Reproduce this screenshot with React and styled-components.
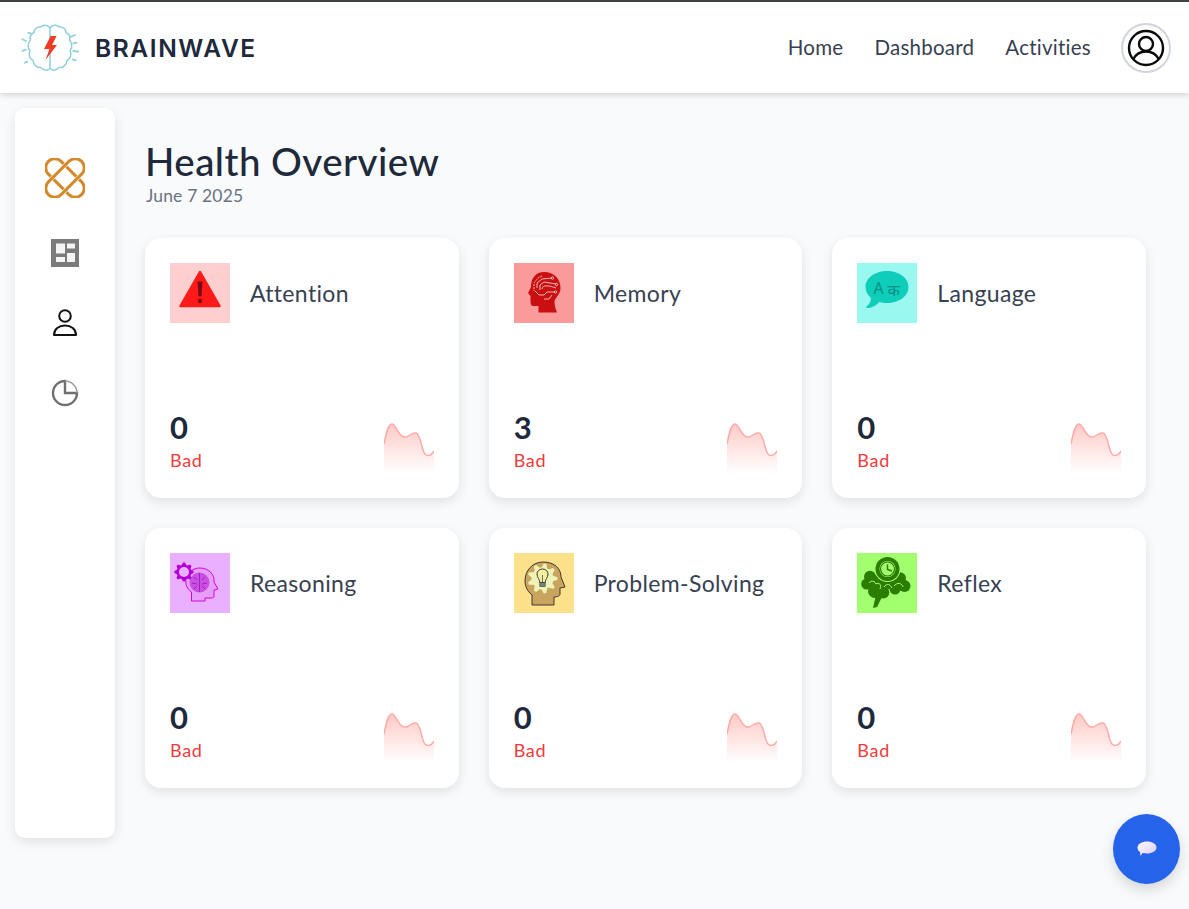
import React from "react";
import styled, { createGlobalStyle } from "styled-components";

const Global = createGlobalStyle`
  html, body { margin: 0; padding: 0; background: #f9fafb; }
  body { font-family: "Lato", "Noto Sans", sans-serif; color: #1f2937; }
  * { box-sizing: border-box; }
`;

const Page = styled.div`
  width: 100%;
  height: 909px;
  overflow: hidden;
  background: #f9fafb;
`;

const Header = styled.header`
  height: 93px;
  background: #fff;
  border-top: 2px solid #3f4440;
  box-shadow: 0 2px 6px rgba(0, 0, 0, 0.16);
  display: flex;
  align-items: center;
  justify-content: space-between;
  padding: 0 18px 0 20px;
  position: relative;
`;

const Brand = styled.div`
  display: flex;
  align-items: center;
  gap: 15px;
`;

const BrandName = styled.span`
  font-family: "Inter", sans-serif;
  font-size: 24.5px;
  font-weight: 600;
  letter-spacing: 1.6px;
  color: #1e293b;
`;

const Nav = styled.nav`
  display: flex;
  align-items: center;
  gap: 31px;
`;

const NavLink = styled.a`
  font-size: 20.5px;
  line-height: 24px;
  margin-top: -2px;
  color: #374151;
  letter-spacing: 0.25px;
`;

const Avatar = styled.div`
  width: 50px;
  height: 50px;
  margin-left: -1px;
  border-radius: 50%;
  border: 2px solid #d1d5db;
  display: flex;
  align-items: center;
  justify-content: center;
`;

const Main = styled.main`
  display: flex;
  padding: 15px 0 0 15px;
  gap: 30px;
`;

const Sidebar = styled.aside`
  width: 100px;
  height: 730px;
  flex: none;
  background: #fff;
  border-radius: 10px;
  box-shadow: 0 4px 12px rgba(0, 0, 0, 0.1);
  display: flex;
  flex-direction: column;
  align-items: center;
  padding-top: 50px;
  gap: 40px;
`;

const SideIcon = styled.div`
  width: 40px;
  height: 30px;
  display: flex;
  align-items: center;
  justify-content: center;
`;

const LeadIcon = styled(SideIcon)`
  height: 40px;
`;

const Content = styled.section`
  width: 1001px;
  padding-top: 31px;
`;

const Title = styled.h1`
  margin: 0;
  font-size: 38.5px;
  line-height: 44px;
  font-weight: 500;
  letter-spacing: 0.45px;
  color: #1e293b;
`;

const DateLine = styled.div`
  margin: 1px 0 0 1px;
  font-size: 17.5px;
  line-height: 24px;
  letter-spacing: 0.15px;
  color: #6b7280;
`;

const Grid = styled.div`
  display: grid;
  grid-template-columns: repeat(3, 1fr);
  column-gap: 30px;
  row-gap: 30px;
  margin-top: 30px;
`;

const Card = styled.article`
  height: 260px;
  background: #fff;
  border-radius: 16px;
  box-shadow: 0 4px 12px rgba(0, 0, 0, 0.1);
  padding: 25px;
  display: flex;
  flex-direction: column;
  justify-content: space-between;
`;

const CardHead = styled.div`
  display: flex;
  align-items: center;
  gap: 20px;
`;

const IconBox = styled.div`
  width: 60px;
  height: 60px;
  flex: none;
  background: ${(p) => p.$bg};
  display: flex;
`;

const CardLabel = styled.h2`
  margin: 0;
  font-size: 23px;
  font-weight: 400;
  letter-spacing: 0.35px;
  color: #374151;
`;

const CardFoot = styled.div`
  display: flex;
  justify-content: space-between;
  align-items: flex-end;
`;

const Score = styled.div`
  font-size: 31px;
  line-height: 36px;
  font-weight: 700;
  margin-bottom: 3px;
  color: #1e293b;
`;

const Status = styled.div`
  font-size: 18px;
  line-height: 24px;
  padding-bottom: 1px;
  letter-spacing: 0.7px;
  color: #ef3b3b;
`;

const Fab = styled.button`
  position: fixed;
  left: 1113px;
  top: 814px;
  width: 67px;
  height: 70px;
  border: 0;
  border-radius: 50%;
  background: #2563eb;
  box-shadow: 0 6px 14px rgba(0, 0, 0, 0.14);
  display: flex;
  align-items: center;
  justify-content: center;
  padding: 0;
`;

const Logo = () => (
  <svg width="60" height="50" viewBox="0 0 60 50" fill="none">
    <g stroke="#8fd0dc" strokeWidth="1.500" strokeLinecap="round" strokeLinejoin="round">
      <path d="M30 5 C28 2 23 1 20.500 4 C17 3.500 14 6 14 9.500 C11 11 9.500 14 10.500 17 C7.500 20 7.500 25 10 27.500 C8 31 9.500 36 13 37.500 C13.500 42 17 45 21 44.500 C24 48 28.500 48 30 45 Z" />
      <path d="M30 5 C32 2 37 1 39.500 4 C43 3.500 46 6 46 9.500 C49 11 50.500 14 49.500 17 C52.500 20 52.500 25 50 27.500 C52 31 50.500 36 47 37.500 C46.500 42 43 45 39 44.500 C36 48 31.500 48 30 45" />
      <path d="M8.300 9.700 L11 10.700 M2.300 16.300 L6 18 M2.300 28 L6 26.700 M5 39.700 L7.300 38.700 M51 13.700 L55 12 M53.300 20.300 L56.700 19.700 M53.300 28 L58.300 28.700 M52.700 36.300 L55.700 37.300" strokeWidth="1.800" />
    </g>
    <path d="M30.700 13 L24 26 L29.500 26 L25.500 37 L37 22 L32 22 L36.500 13 Z" fill="#ef3a24" />
  </svg>
);

const AvatarIcon = () => (
  <svg width="38" height="38" viewBox="0 0 38 38" fill="none" stroke="#0a0a0a" strokeWidth="2.400">
    <circle cx="19" cy="19" r="17" />
    <circle cx="19" cy="15" r="7" />
    <path d="M6.500 30 C9 25 14 22.500 19 22.500 C24 22.500 29 25 31.500 30" />
  </svg>
);

const KnotIcon = () => (
  <svg width="40" height="40" viewBox="0 0 40 40" fill="none" strokeWidth="3">
    <rect x="-3.500" y="11" width="47" height="18" rx="9" transform="rotate(45 20 20)" stroke="#d48a2a" />
    <rect x="-3.500" y="11" width="47" height="18" rx="9" transform="rotate(-45 20 20)" stroke="#ffffff" strokeWidth="4" />
    <rect x="-3.500" y="11" width="47" height="18" rx="9" transform="rotate(-45 20 20)" stroke="#d48a2a" />
  </svg>
);

const PanelsIcon = () => (
  <svg width="28" height="28" viewBox="0 0 28 28">
    <rect width="28" height="28" fill="#7b7b7b" />
    <g fill="#f4f4f4">
      <rect x="5" y="4.500" width="9" height="10" />
      <rect x="16" y="4.500" width="8" height="5" />
      <rect x="5" y="18" width="9" height="5" />
      <rect x="16" y="14" width="8" height="9" />
    </g>
  </svg>
);

const PersonIcon = () => (
  <svg width="26" height="28" viewBox="0 0 26 28" fill="none" stroke="#111" strokeWidth="2">
    <circle cx="13" cy="7" r="5.800" />
    <path d="M2 26 C2 20 7 16.500 13 16.500 C19 16.500 24 20 24 26 Z" strokeLinejoin="round" />
  </svg>
);

const PieIcon = () => (
  <svg width="28" height="28" viewBox="0 0 28 28" fill="none">
    <path d="M14 2 A12 12 0 1 0 26 14 L14 14 Z" stroke="#707070" strokeWidth="2.400" />
    <path d="M14 2 A12 12 0 0 1 26 14" stroke="#9a9a9a" strokeWidth="1.400" />
  </svg>
);

const Svg60 = ({ children }) => (
  <svg width="60" height="60" viewBox="0 0 60 60" fill="none">
    {children}
  </svg>
);

const AttentionIcon = () => (
  <Svg60>
    <path d="M30 9 L49.500 43 L10.500 43 Z" fill="#ff1a1a" stroke="#ff1a1a" strokeWidth="2.500" strokeLinejoin="round" />
    <path d="M28 19 L32 19 L31 33 L29 33 Z" fill="#7c0a16" stroke="#7c0a16" strokeLinejoin="round" />
    <circle cx="30" cy="38" r="2.200" fill="#7c0a16" />
  </Svg60>
);

const MemoryIcon = () => (
  <Svg60>
    <path
      d="M30 9 C40 9 47 16 46.500 26 C46 31 42 34 40.500 38 C40.500 42 41.500 46 43 49.500 L24.500 49.500 L24.500 43 L19 43 C17 43 16.500 40 16.500 37 L16.500 33 L14 30 L17 24 C17 15 22 9 30 9 Z"
      fill="#c90f0f"
    />
    <g stroke="#f6c6c6" strokeWidth="0.900" fill="none">
      <path d="M23 25 L23 20 L28 16 L38 15 M26 27 L26 22 L30 19 L42 21 M28 26 C28 22 34 22 42 25 M21 28 L25 32 L30 32 L33 29 L41 29 M30 36 L35 36 L38 32" />
      <circle cx="38.500" cy="15" r="1.200" />
      <circle cx="42.500" cy="21.500" r="1.200" />
      <circle cx="41.500" cy="29" r="1.200" />
      <path d="M28 13 L24 15 L20 20 L20 28" strokeDasharray="2 1" />
    </g>
  </Svg60>
);

const LangText = styled.text`
  font-family: "Noto Sans", "DejaVu Sans", sans-serif;
  fill: #0a8f85;
`;

const LanguageIcon = () => (
  <Svg60>
    <path
      d="M30 8 C42 8 51.500 15 51.500 24 C51.500 33 42 40 30 40 C27 40 24.500 39.500 22 39 C19 43 14 45 10 45 C9 45 9 44 10 43 C12.500 41.500 14 38 14 35 C10.500 32 8.500 28 8.500 24 C8.500 15 18 8 30 8 Z"
      fill="#0ecdb9"
    />
    <LangText x="16.500" y="31" fontSize="16">A</LangText>
    <LangText x="30.500" y="33" fontSize="16">क</LangText>
  </Svg60>
);

const gearTeeth = (cx, cy, r1, r2, n) => {
  const pts = [];
  for (let i = 0; i < n * 4; i += 1) {
    const a = ((i - 0.5) / (n * 4)) * Math.PI * 2;
    const r = i % 4 < 2 ? r2 : r1;
    pts.push(`${(cx + r * Math.cos(a)).toFixed(2)},${(cy + r * Math.sin(a)).toFixed(2)}`);
  }
  return pts.join(" ");
};

const ReasoningIcon = () => (
  <Svg60>
    <path
      d="M30 15 C39 15 45 22 44 29 L48 36 L44 37 L44 43 C44 45 42 45 39 45 L35 45 L35 48 L21.500 48 L21.500 39 C17 36 15 31 16 26 C18 19 23 15 30 15 Z"
      fill="#e89df8"
      stroke="#d400ea"
      strokeWidth="1"
    />
    <circle cx="29.500" cy="29.500" r="10" fill="#c951e2" />
    <path d="M29.500 20 L29.500 39 M24 24 L27 27 M35 24 L32 27 M22 30 L27 31 M37 30 L32 31 M24 36 L27 33 M35 36 L32 33" stroke="#a51fc4" strokeWidth="1" />
    <polygon points={gearTeeth(14, 19, 7.500, 9.600, 8)} fill="#b400d8" />
    <circle cx="14" cy="19" r="5" fill="#e9b0ff" />
  </Svg60>
);

const ProblemIcon = () => (
  <Svg60>
    <path
      d="M29 9 C41 9 47 16 47 24 L51 34 L46 35 L46 41 C46 43 43 44 40 44 L40 52 L18 52 L18 42 C13 38 11 33 11 28 C11 17 19 9 29 9 Z"
      fill="#c9a45f"
      stroke="#3c3a30"
      strokeWidth="1"
    />
    <polygon points={gearTeeth(28.500, 25.500, 11, 15, 9)} fill="#eff3b5" />
    <path d="M28.500 16 C25 16 23 18.500 23 21 C23 25 25.800 26 25.800 29.500 L31.200 29.500 C31.200 26 34 25 34 21 C34 18.500 32 16 28.500 16 Z" fill="#f5efa0" stroke="#3c3a30" strokeWidth="1" />
    <rect x="25.800" y="29.500" width="5.400" height="4" fill="#77808a" stroke="#3c3a30" strokeWidth="0.600" />
    <path d="M28.500 29.500 L28.500 22" stroke="#3c3a30" strokeWidth="0.700" />
  </Svg60>
);

const ReflexIcon = () => (
  <Svg60>
    <g fill="#2a7d00">
      <circle cx="13" cy="23.700" r="6" />
      <circle cx="9.700" cy="31" r="5.500" />
      <circle cx="18" cy="38" r="7" />
      <circle cx="26.300" cy="39.500" r="6" />
      <circle cx="38" cy="36" r="5.500" />
      <circle cx="47.500" cy="33" r="6" />
      <circle cx="43" cy="25.300" r="6" />
      <rect x="13" y="22" width="32" height="14" />
      <path d="M16 55 L19 42 L25 44 L20 54 Z" />
    </g>
    <path d="M12 30 C14 27 18 28 19 31 C22 29 25 32 23 36 M37 33 C40 29 45 30 46 34 M27 34 C30 30 33 31 35 35" stroke="#a2ff6e" strokeWidth="1" />
    <circle cx="30.500" cy="16" r="13" fill="#a2ff6e" />
    <circle cx="30.500" cy="16" r="12" fill="#2a7d00" />
    <circle cx="30.500" cy="16" r="8" fill="#a2ff6e" />
    <circle cx="30.500" cy="16" r="7" fill="none" stroke="#2a7d00" strokeWidth="1.200" />
    <path d="M30.500 11.500 L30.500 16.500 L35 18" stroke="#2a7d00" strokeWidth="1.400" />
  </Svg60>
);

const Spark = ({ id }) => (
  <svg width="50" height="52" viewBox="0 0 50 52" fill="none">
    <defs>
      <linearGradient id={id} x1="0" y1="0" x2="0" y2="1">
        <stop offset="0" stopColor="#ffb3ae" stopOpacity="0.7" />
        <stop offset="1" stopColor="#ffb3ae" stopOpacity="0" />
      </linearGradient>
    </defs>
    <path
      d="M0 23 C2 13 4 3 8 3 C12 3 14 15 20 16 C25 17 27 11 32 12 C37 13 37 28 41 33 C44 36 48 34 50 30 L50 52 L0 52 Z"
      fill={`url(#${id})`}
    />
    <path
      d="M0 23 C2 13 4 3 8 3 C12 3 14 15 20 16 C25 17 27 11 32 12 C37 13 37 28 41 33 C44 36 48 34 50 30"
      stroke="#ffaaa5"
      strokeWidth="1.500"
    />
  </svg>
);

const ChatIcon = () => (
  <svg width="20" height="16" viewBox="0 0 20 16">
    <defs>
      <linearGradient id="chatfill" x1="0" y1="0" x2="1" y2="1">
        <stop offset="0" stopColor="#ffffff" />
        <stop offset="1" stopColor="#d9c8f5" />
      </linearGradient>
    </defs>
    <path
      d="M10 0.500 C15 0.500 19.500 3 19.500 6.500 C19.500 10 15 12.500 10 12.500 C8.500 12.500 7 12.300 5.500 12 L3.500 15 L3 11 C1.500 10 0.500 8.300 0.500 6.500 C0.500 3 5 0.500 10 0.500 Z"
      fill="url(#chatfill)"
    />
  </svg>
);

const areas = [
  { name: "Attention", score: 0, bg: "#ffcfcf", Icon: AttentionIcon },
  { name: "Memory", score: 3, bg: "#fb9a9a", Icon: MemoryIcon },
  { name: "Language", score: 0, bg: "#99f8f0", Icon: LanguageIcon },
  { name: "Reasoning", score: 0, bg: "#e9b0ff", Icon: ReasoningIcon },
  { name: "Problem-Solving", score: 0, bg: "#fde08a", Icon: ProblemIcon },
  { name: "Reflex", score: 0, bg: "#a2ff6e", Icon: ReflexIcon },
];

export default function App() {
  return (
    <Page>
      <Global />
      <Header>
        <Brand>
          <Logo />
          <BrandName>BRAINWAVE</BrandName>
        </Brand>
        <Nav>
          <NavLink>Home</NavLink>
          <NavLink>Dashboard</NavLink>
          <NavLink>Activities</NavLink>
          <Avatar>
            <AvatarIcon />
          </Avatar>
        </Nav>
      </Header>
      <Main>
        <Sidebar>
          <LeadIcon><KnotIcon /></LeadIcon>
          <SideIcon><PanelsIcon /></SideIcon>
          <SideIcon><PersonIcon /></SideIcon>
          <SideIcon><PieIcon /></SideIcon>
        </Sidebar>
        <Content>
          <Title>Health Overview</Title>
          <DateLine>June 7 2025</DateLine>
          <Grid>
            {areas.map(({ name, score, bg, Icon }) => (
              <Card key={name}>
                <CardHead>
                  <IconBox $bg={bg}>
                    <Icon />
                  </IconBox>
                  <CardLabel>{name}</CardLabel>
                </CardHead>
                <CardFoot>
                  <div>
                    <Score>{score}</Score>
                    <Status>Bad</Status>
                  </div>
                  <Spark id={`spark-${name}`} />
                </CardFoot>
              </Card>
            ))}
          </Grid>
        </Content>
      </Main>
      <Fab aria-label="Chat">
        <ChatIcon />
      </Fab>
    </Page>
  );
}
